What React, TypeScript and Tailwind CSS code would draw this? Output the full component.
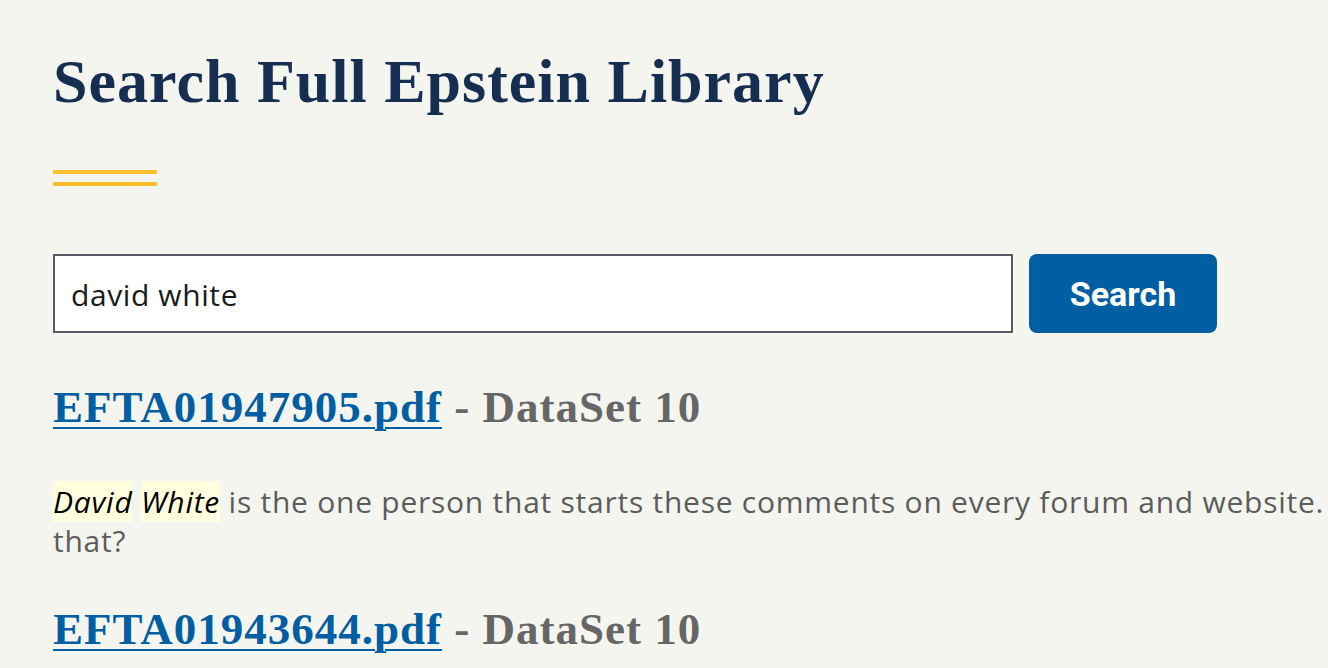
import React from "react";

const serif = { fontFamily: '"Liberation Serif", "DejaVu Serif", serif' };
const sans = { fontFamily: '"Open Sans", "Noto Sans", sans-serif' };

function Result({ file }: { file: string }) {
  return (
    <h2 className="text-[45px] font-bold leading-[56px] tracking-[1px] text-[#666666]" style={serif}>
      <a href="#" className="text-[#005ea2] underline decoration-[2px] underline-offset-[5px]">
        {file}
      </a>{" "}
      - DataSet 10
    </h2>
  );
}

export default function App() {
  return (
    <div className="w-screen h-screen overflow-hidden bg-[#f5f5f0]">
      <div className="w-[1500px] pl-[53px] pt-[43px]" style={sans}>
        <h1 className="text-[62px] font-bold leading-[76px] tracking-[1px] text-[#162e51]" style={serif}>
          Search Full Epstein Library
        </h1>
        <div className="mt-[51px] flex flex-col gap-[8px] w-[104px]">
          <div className="h-[4px] bg-[#ffbe2e]" />
          <div className="h-[4px] bg-[#ffbe2e]" />
        </div>
        <div className="mt-[68px] flex gap-[16px]">
          <input
            className="w-[960px] h-[79px] border-2 border-[#565c65] bg-white px-[16px] pt-[2px] text-[30px] tracking-[0.6px] text-[#1b1b1b] outline-none"
            style={sans}
            defaultValue="david white"
          />
          <button
            className="w-[188px] h-[79px] rounded-[8px] bg-[#005ea2] pt-[2px] text-white text-[34px] font-bold"
            style={{ fontFamily: 'Roboto, "Liberation Sans", sans-serif' }}
          >
            Search
          </button>
        </div>
        <div className="mt-[46px]">
          <Result file="EFTA01947905.pdf" />
        </div>
        <p className="mt-[47px] w-[1420px] text-[30px] leading-[39px] tracking-[0.75px] text-[#5c5c5c]">
          <em className="bg-[#ffffdd] text-black">David</em>{" "}
          <em className="bg-[#ffffdd] text-black">White</em> is the one person that starts these comments on every forum and website. Why is that?
        </p>
        <div className="mt-[41px]">
          <Result file="EFTA01943644.pdf" />
        </div>
      </div>
    </div>
  );
}
